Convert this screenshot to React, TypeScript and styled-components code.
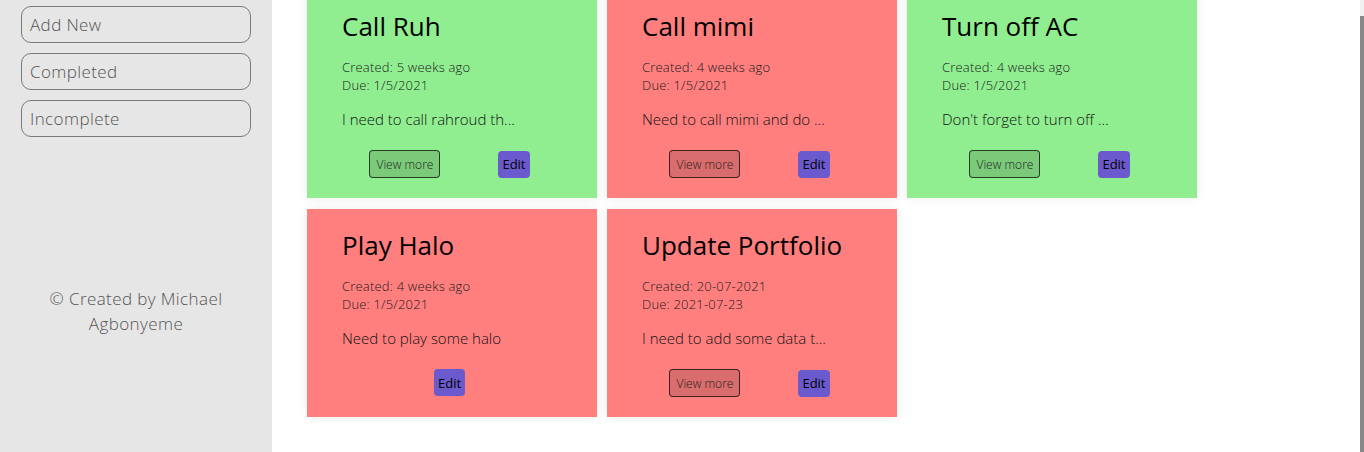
import { useLayoutEffect, useRef } from "react"
import styled, { createGlobalStyle } from "styled-components"

interface Todo {
  title: string
  created: string
  due: string
  text: string
  done: boolean
  more: boolean
}

const todos: Todo[] = [
  { title: "Call Ruh", created: "5 weeks ago", due: "1/5/2021", text: "I need to call rahroud th...", done: true, more: true },
  { title: "Call mimi", created: "4 weeks ago", due: "1/5/2021", text: "Need to call mimi and do ...", done: false, more: true },
  { title: "Turn off AC", created: "4 weeks ago", due: "1/5/2021", text: "Don't forget to turn off ...", done: true, more: true },
  { title: "Play Halo", created: "4 weeks ago", due: "1/5/2021", text: "Need to play some halo", done: false, more: false },
  { title: "Update Portfolio", created: "20-07-2021", due: "2021-07-23", text: "I need to add some data t...", done: false, more: true },
]

const App = () => {
  const mainRef = useRef<HTMLDivElement | null>(null)

  useLayoutEffect(() => {
    // page is shown scrolled down to the bottom
    if (mainRef.current) mainRef.current.scrollTop = mainRef.current.scrollHeight
  }, [])

  return (
    <>
      <GlobalStyle />
      <Layout>
        <Sidebar>
          <NavButton>Add New</NavButton>
          <NavButton>Completed</NavButton>
          <NavButton>Incomplete</NavButton>
          <Footer>© Created by Michael Agbonyeme</Footer>
        </Sidebar>

        <Main ref={mainRef}>
          <Grid>
            {todos.map((t) => (
              <Card key={t.title} $done={t.done}>
                <Title>{t.title}</Title>
                <Meta>
                  Created: {t.created}
                  <br />
                  Due: {t.due}
                </Meta>
                <Desc>{t.text}</Desc>
                <Actions>
                  {t.more && <MoreButton>View more</MoreButton>}
                  <EditButton>Edit</EditButton>
                </Actions>
              </Card>
            ))}
          </Grid>
        </Main>
        {/* overlay scrollbar of the scrolled list */}
        <ScrollTrack>
          <ScrollThumb />
        </ScrollTrack>
      </Layout>
    </>
  )
}

const GlobalStyle = createGlobalStyle`
  html, body {
    margin: 0;
    padding: 0;
    height: 100%;
    overflow: hidden;
  }
  body {
    font-family: "Open Sans", "Liberation Sans", sans-serif;
    background: #fff;
  }
  * { box-sizing: border-box; }
`

const Layout = styled.div`
  position: relative;
  display: flex;
  height: 100vh;
`

const Sidebar = styled.aside`
  width: 272px;
  flex-shrink: 0;
  background: #e6e6e6;
  padding: 6px 21px 0;
  display: flex;
  flex-direction: column;
  gap: 10px;
`

const NavButton = styled.button`
  height: 37px;
  width: 100%;
  display: flex;
  align-items: center;
  padding: 0 8px;
  background: transparent;
  border: 1px solid #7a7a7a;
  border-radius: 10px;
  font-family: inherit;
  font-size: 17px;
  letter-spacing: 0.4px;
  font-weight: 300;
  color: #555;
  cursor: pointer;
`

const Footer = styled.p`
  margin: 139px 0 0;
  text-align: center;
  font-size: 17px;
  letter-spacing: 0.4px;
  font-weight: 300;
  line-height: 25px;
  color: #555;
`

const Main = styled.main`
  flex: 1;
  height: 100vh;
  overflow-y: scroll;
  scrollbar-width: none;

  &::-webkit-scrollbar {
    display: none;
  }
`

const ScrollTrack = styled.div`
  position: absolute;
  top: 0;
  right: 0;
  bottom: 0;
  width: 4px;
  background: #f1f1f1;
  padding-top: 16px;
  display: flex;
`

const ScrollThumb = styled.div`
  flex: 1;
  background: #888;
`

const Grid = styled.div`
  display: grid;
  grid-template-columns: repeat(auto-fill, 290px);
  column-gap: 10px;
  row-gap: 11px;
  padding: 6px 30px 35px 35px;
`

const Card = styled.div<{ $done: boolean }>`
  height: 208px;
  background: ${(p) => (p.$done ? "#90ee90" : "#ff7f7f")};
  box-shadow: 0 0 10px rgba(0, 0, 0, 0.08);
  padding: 16px 40px 20px 35px;
  display: flex;
  flex-direction: column;
`

const Title = styled.h2`
  margin: 0;
  font-size: 26px;
  line-height: 40px;
  font-weight: 500;
  color: #000;
  white-space: nowrap;
`

const Meta = styled.p`
  margin: 12px 0 0;
  font-size: 13px;
  letter-spacing: 0.2px;
  line-height: 18px;
  font-weight: 300;
  color: #1a1a1a;
`

const Desc = styled.p`
  margin: 14px 0 0;
  font-size: 15px;
  line-height: 22px;
  font-weight: 300;
  color: #111;
  white-space: nowrap;
`

const Actions = styled.div`
  margin-top: 20px;
  display: flex;
  justify-content: center;
  align-items: center;
  gap: 58px;
`

const MoreButton = styled.button`
  height: 28px;
  padding: 0 6px;
  background: rgba(0, 0, 0, 0.15);
  border: 1px solid rgba(0, 0, 0, 0.7);
  border-radius: 4px;
  font-family: inherit;
  font-size: 12px;
  font-weight: 300;
  color: #222;
  cursor: pointer;
`

const EditButton = styled.button`
  height: 27px;
  padding: 0 4px;
  background: #6a5acd;
  border: none;
  border-radius: 4px;
  font-family: inherit;
  font-size: 13px;
  color: #000;
  cursor: pointer;
`

export default App
